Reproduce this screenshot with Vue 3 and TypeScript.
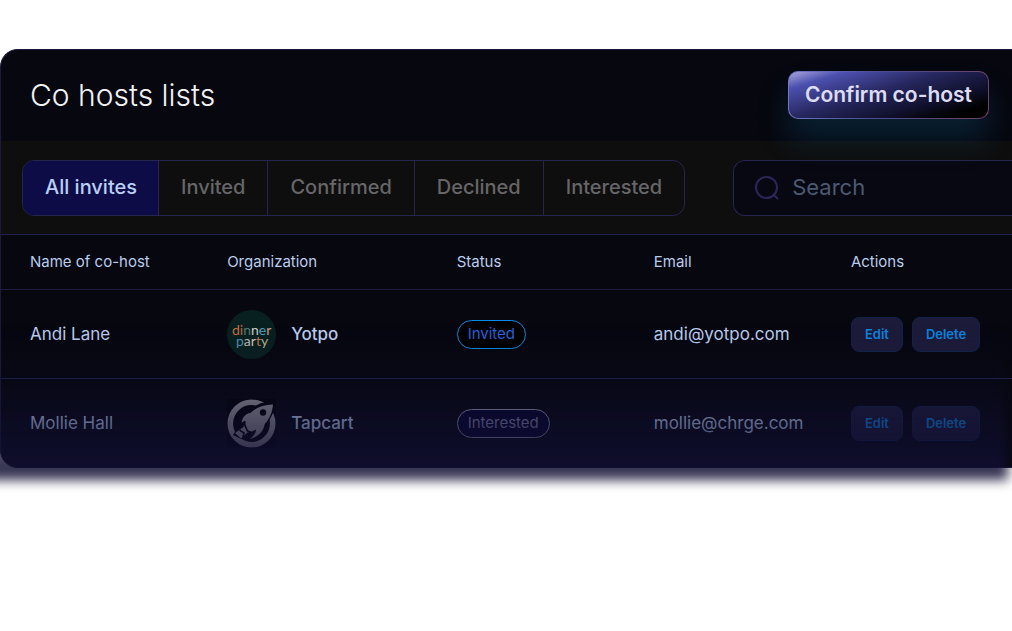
<script setup lang="ts">
import { ref } from 'vue'

interface CoHost {
  name: string
  organization: string
  logo: 'dinner' | 'rocket'
  status: 'Invited' | 'Interested'
  email: string
}

const tabs = ['All invites', 'Invited', 'Confirmed', 'Declined', 'Interested']
const active = ref('All invites')
const search = ref('')
const hosts: CoHost[] = [
  { name: 'Andi Lane', organization: 'Yotpo', logo: 'dinner', status: 'Invited', email: 'andi@yotpo.com' },
  { name: 'Mollie Hall', organization: 'Tapcart', logo: 'rocket', status: 'Interested', email: 'mollie@chrge.com' },
]
</script>

<template>
  <main class="page">
    <section class="card">
      <header class="head">
        <h1>Co hosts lists</h1>
        <button type="button" class="confirm">Confirm co-host</button>
      </header>
      <div class="toolbar">
        <div class="tabs">
          <button
            v-for="tab in tabs"
            :key="tab"
            type="button"
            :class="['tab', { active: tab === active }]"
            :aria-pressed="tab === active"
            @click="active = tab"
          >{{ tab }}</button>
        </div>
        <label class="search">
          <svg width="26" height="26" viewBox="0 0 26 26" fill="none" aria-hidden="true">
            <circle cx="12.5" cy="12.5" r="10.5" stroke="#292757" stroke-width="2" />
            <path d="M19.5 19.5l4 4" stroke="#292757" stroke-width="2" stroke-linecap="round" />
          </svg>
          <input v-model="search" type="search" placeholder="Search" aria-label="Search" />
        </label>
      </div>
      <table>
        <colgroup>
          <col class="c-name" />
          <col class="c-org" />
          <col class="c-status" />
          <col class="c-email" />
          <col />
        </colgroup>
        <thead>
          <tr>
            <th scope="col">Name of co-host</th>
            <th scope="col">Organization</th>
            <th scope="col">Status</th>
            <th scope="col">Email</th>
            <th scope="col">Actions</th>
          </tr>
        </thead>
        <tbody>
          <tr v-for="host in hosts" :key="host.email">
            <td>{{ host.name }}</td>
            <td>
              <div class="org">
                <svg v-if="host.logo === 'dinner'" class="logo" viewBox="0 0 49 49" aria-hidden="true">
                  <circle cx="24.5" cy="24.5" r="24.5" fill="#08201f" />
                  <g class="logo-text">
                    <text x="5" y="25"><tspan fill="#c96c41">d</tspan><tspan fill="#b5694b">i</tspan><tspan fill="#56796f">n</tspan><tspan fill="#d0c9c0">n</tspan><tspan fill="#4c9dbb">e</tspan><tspan fill="#c49a8b">r</tspan></text>
                    <text x="9" y="36"><tspan fill="#4c92b3">p</tspan><tspan fill="#c6bcb0">a</tspan><tspan fill="#c6c5c1">r</tspan><tspan fill="#c6724f">t</tspan><tspan fill="#b3b095">y</tspan></text>
                  </g>
                </svg>
                <svg v-else class="logo" viewBox="0 0 49 49" aria-hidden="true">
                  <rect width="49" height="49" rx="3" fill="#020207" />
                  <circle cx="24.5" cy="24.5" r="21.2" fill="none" stroke="#8f8d94" stroke-width="5.600" />
                  <path d="M6 36L11 28L8 24L13 15L22 10L34 4L47 3.500L46 14L40 26L33 36L21 43L25 35L14 40Z" fill="#020207" />
                  <path d="M46 5.500C36 6 29 8.500 23.500 14C18.500 14.500 15.500 18 14.500 23.500L18 22L16.500 28L8 34L14 39.500L21 33L22.500 34L29 30.500C29 34 27 36.500 23 40C31 37.500 36.500 33 37.500 25.500C42.500 20 45.500 13 46 5.500Z" fill="#8f8d94" />
                  <path d="M18 22C16.500 26 19 28 20 31L23.500 34.500M12.500 31L17 34L16 38M20 32L27 34" fill="none" stroke="#020207" stroke-width="1.600" />
                  <circle cx="36" cy="13.500" r="3.200" fill="#020207" />
                </svg>
                <span>{{ host.organization }}</span>
              </div>
            </td>
            <td><span :class="['pill', host.status.toLowerCase()]">{{ host.status }}</span></td>
            <td>{{ host.email }}</td>
            <td>
              <div class="actions">
                <button type="button">Edit</button>
                <button type="button">Delete</button>
              </div>
            </td>
          </tr>
        </tbody>
      </table>
      <div class="fade" aria-hidden="true"></div>
    </section>
  </main>
</template>

<style>
body {
  margin: 0;
  background: #fff;
  overflow-x: hidden;
}
</style>

<style scoped>
* {
  box-sizing: border-box;
}
.page {
  padding: 49px 0 160px;
  overflow: hidden;
  font-family: Inter, "Liberation Sans", sans-serif;
}
.card {
  position: relative;
  background: #06070f;
  border: 1px solid #1c1b3b;
  border-right: 0;
  border-radius: 18px 0 0 18px;
  color: #b9ccee;
}
button {
  font-family: inherit;
  margin: 0;
  cursor: pointer;
}
.head {
  display: flex;
  align-items: center;
  justify-content: space-between;
  height: 91px;
  padding: 0 23px 2px 29px;
}
h1 {
  margin: 0;
  color: #f2f2f5;
  font-size: 30px;
  line-height: 36px;
  font-weight: 300;
}
.confirm {
  position: relative;
  z-index: 1;
  height: 48px;
  padding: 0 16px;
  border: 1px solid transparent;
  border-radius: 10px;
  color: #dcdcf5;
  font-size: 21px;
  font-weight: 600;
  white-space: nowrap;
  background:
    linear-gradient(163deg, #a9a5e0 0%, #4c50ae 16%, #25265c 45%, #10102d 70%, #000 88%) padding-box,
    linear-gradient(100deg, #7678ca, #4c4b8d 45%, #704363) border-box;
  box-shadow: 0 20px 30px rgba(16, 84, 120, 0.32);
}
.toolbar {
  display: flex;
  align-items: center;
  justify-content: space-between;
  gap: 48px;
  height: 94px;
  padding-left: 21px;
  background: #0e0e0e;
  border-bottom: 1px solid #22224f;
}
.tabs {
  display: flex;
  height: 56px;
  overflow: hidden;
  border: 1px solid #26254f;
  border-radius: 12px;
}
.tab {
  padding: 0 22px 2px;
  border: 0;
  border-left: 1px solid #26254f;
  background: transparent;
  color: #666668;
  font-size: 20px;
  font-weight: 500;
  white-space: nowrap;
}
.tab:first-child {
  padding-right: 21px;
  border-left: 0;
}
.tab.active {
  background: #0d0c47;
  color: #b9cff5;
  font-weight: 500;
}
.search {
  display: flex;
  flex: 1;
  align-items: center;
  gap: 12px;
  min-width: 0;
  height: 56px;
  padding-left: 20px;
  background: #080812;
  border: 1px solid #26254f;
  border-right: 0;
  border-radius: 12px 0 0 12px;
}
.search svg {
  flex: none;
}
.search input {
  flex: 1;
  min-width: 0;
  padding: 0 0 2px;
  border: 0;
  outline: 0;
  background: transparent;
  color: #b3c5e6;
  font: 400 22px/28px Inter, "Liberation Sans", sans-serif;
}
.search input::placeholder {
  color: #4b5a70;
  opacity: 1;
}
table {
  width: 100%;
  table-layout: fixed;
  border-collapse: separate;
  border-spacing: 0;
}
.c-name,
.c-status,
.c-email {
  width: 19.5%;
}
.c-org {
  width: 22.7%;
}
th,
td {
  padding: 0 0 0 29px;
  text-align: left;
  white-space: nowrap;
}
th {
  height: 55px;
  padding-bottom: 2px;
  font-size: 15px;
  font-weight: 400;
  border-bottom: 1px solid #1f1f42;
}
td {
  height: 89px;
  font-size: 17px;
  font-weight: 400;
  border-bottom: 1px solid #24224a;
}
tr:last-child td {
  height: 88px;
  border-bottom: 0;
}
.org {
  display: flex;
  align-items: center;
  gap: 15px;
  font-weight: 500;
}
.logo {
  width: 49px;
  height: 49px;
  flex: none;
}
.logo-text {
  font: 400 14px Lato, sans-serif;
}
.pill {
  display: inline-block;
  height: 29px;
  padding: 0 10px;
  border: 1px solid;
  border-radius: 15px;
  font-size: 15px;
  line-height: 26px;
}
.invited {
  background: #000;
  border-color: #0a8ae6;
  color: #2563db;
}
.interested {
  background: #04042a;
  border-color: #9391a8;
  color: #7f7da3;
}
.actions {
  display: flex;
  gap: 9px;
}
.actions button {
  height: 35px;
  padding: 0 13px;
  border: 1px solid #12234a;
  border-radius: 8px;
  background: #1c1b39;
  color: #0a84de;
  font-size: 13px;
  font-weight: 600;
}
.fade {
  position: absolute;
  right: 4px;
  bottom: -13px;
  left: -20px;
  height: 150px;
  background: linear-gradient(rgba(17, 15, 50, 0), rgba(17, 15, 50, 0.16) 30%, rgba(17, 15, 50, 0.86) 92%);
  filter: blur(6px);
  pointer-events: none;
}
</style>
